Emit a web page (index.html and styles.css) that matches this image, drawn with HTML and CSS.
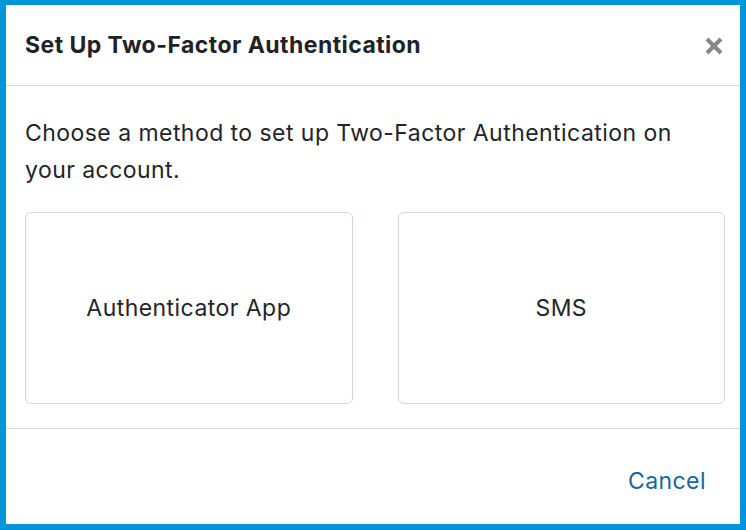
FILE: index.html
```html
<!DOCTYPE html>
<html lang="en">
<head>
<meta charset="utf-8">
<title>Set Up Two-Factor Authentication</title>
<link rel="stylesheet" href="styles.css">
</head>
<body>
<div class="modal">
  <header class="modal-header">
    <h1 class="modal-title">Set Up Two-Factor Authentication</h1>
    <button class="close" aria-label="Close">
      <svg width="20" height="20" viewBox="0 0 20 20"><path d="M3 3 L17 17 M17 3 L3 17" stroke="#888" stroke-width="4.2" stroke-linecap="butt"/></svg>
    </button>
  </header>
  <main class="modal-body">
    <p class="intro">Choose a method to set up Two-Factor Authentication on your account.</p>
    <div class="options">
      <button class="option">Authenticator App</button>
      <button class="option">SMS</button>
    </div>
  </main>
  <footer class="modal-footer">
    <a class="cancel" href="#">Cancel</a>
  </footer>
</div>
</body>
</html>
```
FILE: styles.css
```css
html, body {
  margin: 0;
  padding: 0;
  height: 100%;
}
body {
  background: #0096d9;
  padding: 5px 6px 6px 6px;
  box-sizing: border-box;
  font-family: Inter, "Noto Sans", sans-serif;
  color: #222529;
}
.modal {
  background: #fff;
  height: 100%;
  display: flex;
  flex-direction: column;
}
.modal-header {
  height: 81px;
  display: flex;
  align-items: center;
  justify-content: space-between;
  padding: 0 16px 0 19px;
  border-bottom: 1px solid #d3dbe3;
  box-sizing: border-box;
}
.modal-title {
  margin: 0;
  font-size: 23px;
  font-weight: 700;
  letter-spacing: 0.45px;
  color: #1f2226;
}
.close {
  border: 0;
  background: none;
  padding: 0;
  width: 20px;
  height: 20px;
  margin-top: 2px;
  cursor: pointer;
}
.close svg { display: block; }
.modal-body {
  padding: 29px 15px 24px 19px;
  border-bottom: 1px solid #d3dbe3;
}
.intro {
  margin: 0;
  font-size: 23px;
  letter-spacing: 0.45px;
  line-height: 37px;
  color: #222529;
}
.options {
  margin-top: 23px;
  display: grid;
  grid-template-columns: 1fr 1fr;
  gap: 45px;
}
.option {
  height: 192px;
  border: 1px solid #cfd8e2;
  border-radius: 6px;
  background: #fff;
  font-family: inherit;
  font-size: 23px;
  letter-spacing: 0.45px;
  color: #222529;
  cursor: pointer;
}
.modal-footer {
  flex: 1;
  display: flex;
  justify-content: flex-end;
  align-items: flex-start;
  padding: 39px 34px 0 0;
}
.cancel {
  font-size: 23px;
  letter-spacing: 0.45px;
  line-height: 26px;
  color: #1467a0;
  text-decoration: none;
}
```
